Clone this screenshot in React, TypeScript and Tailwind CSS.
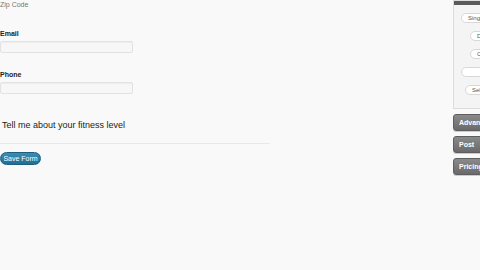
import React from 'react';

// Form builder canvas with a clipped sidebar on the right

const font = { fontFamily: '"Liberation Sans", Arial, sans-serif' };

function Field({ label }: { label: string }) {
  return (
    <div className="flex flex-col">
      <div className="text-[7px] font-bold text-[#222] leading-[9px] h-[9px]">{label}</div>
      <div className="mt-[3px] h-[12px] w-[133px] rounded-[2px] border border-[#e2e2e2] bg-[#f7f7f7] shadow-[inset_0_1px_1px_rgba(0,0,0,0.04)]" />
    </div>
  );
}

function Pill({ text, offset }: { text: string; offset: string }) {
  return (
    <div className={`h-[10px] rounded-full border border-[#d8d8d8] bg-white text-[6px] leading-[8px] text-[#555] pl-[6px] whitespace-nowrap ${offset}`}>
      {text}
    </div>
  );
}

function SideButton({ text }: { text: string }) {
  return (
    <div className="h-[17px] w-[40px] rounded-[3px] border border-[#5e5e5e] bg-gradient-to-b from-[#8a8a8a] to-[#6a6a6a] text-white text-[7px] font-bold leading-[15px] pl-[5px] shadow-[0_1px_0_#ccc]">
      {text}
    </div>
  );
}

export default function App() {
  return (
    <div className="w-[480px] h-[270px] overflow-hidden bg-[#f9f9f9] flex" style={font}>
      <div className="w-[453px] shrink-0 flex flex-col">
        <div className="text-[7px] text-[#777] leading-[9px]">Zip Code</div>
        <div className="mt-[20px] flex flex-col gap-[17px]">
          <Field label="Email" />
          <Field label="Phone" />
        </div>
        <div className="mt-[25px] pl-[2px] text-[9px] text-[#222] leading-[12px]">Tell me about your fitness level</div>
        <div className="mt-[12px] w-[270px] h-px bg-[#e9e9e9]" />
        <div className="mt-[8px] w-[41px] h-[13px] rounded-full bg-gradient-to-b from-[#3b8db5] to-[#1f6f95] border border-[#1c5f80] text-white text-[7px] leading-[11px] text-center whitespace-nowrap">
          Save Form
        </div>
      </div>
      <div className="flex-1 flex flex-col overflow-hidden">
        <div className="w-[40px] h-[109px] border border-[#dcdcdc] bg-[#f4f4f4] flex flex-col">
          <div className="h-[4px] bg-[#5b5b5b]" />
          <div className="flex flex-col gap-[8px] pt-[8px] pl-[7px]">
            <Pill text="Single" offset="ml-0" />
            <Pill text="Date" offset="ml-[9px]" />
            <Pill text="Check" offset="ml-[9px]" />
            <Pill text="" offset="ml-0" />
            <Pill text="Select" offset="ml-[4px]" />
          </div>
        </div>
        <div className="mt-[5px] flex flex-col gap-[5px]">
          <SideButton text="Advanced" />
          <SideButton text="Post" />
          <SideButton text="Pricing" />
        </div>
      </div>
    </div>
  );
}
